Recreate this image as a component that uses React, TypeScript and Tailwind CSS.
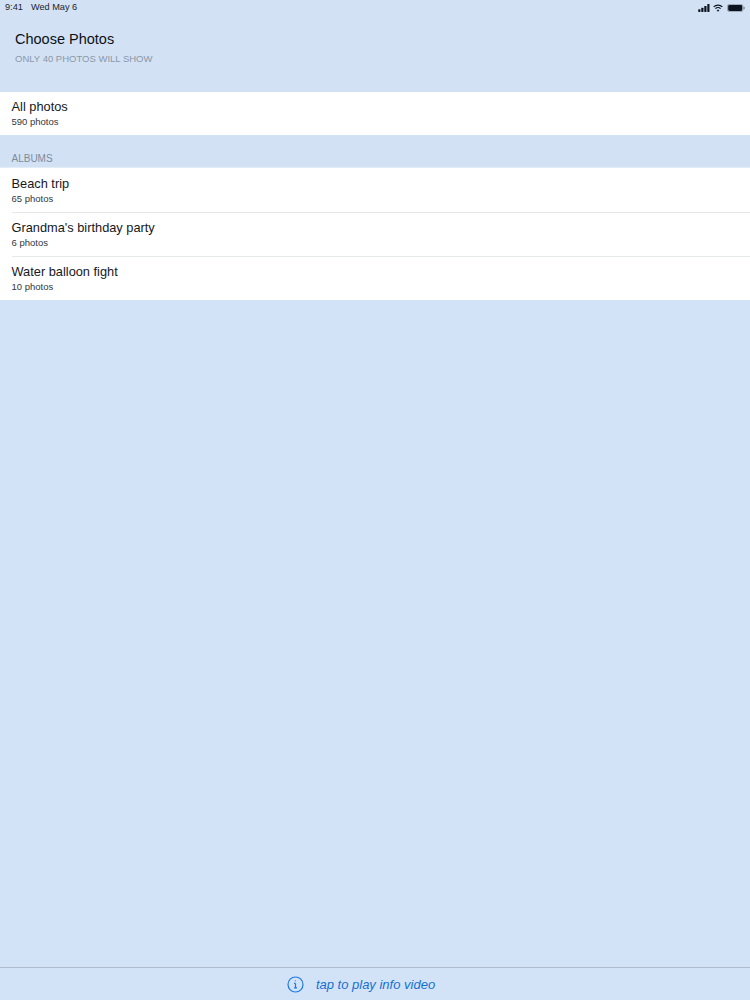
import React from 'react';

const font = { fontFamily: '"Liberation Sans", Arial, sans-serif' };

const albums = [
  { title: 'Beach trip', count: '65 photos' },
  { title: "Grandma's birthday party", count: '6 photos' },
  { title: 'Water balloon fight', count: '10 photos' },
];

function Row({ title, count, divider }: { title: string; count: string; divider?: boolean }) {
  return (
    <div className="h-[44px] pl-[11.5px] flex flex-col">
      <div className={`flex-1 flex flex-col ${divider ? 'border-t border-[#e6e8eb] pt-[7px]' : 'pt-[8px]'}`}>
        <div className="text-[12.8px] leading-[16px] text-[#15181c]">{title}</div>
        <div className="text-[9.5px] leading-[12px] mt-[1px] text-[#33383d]">{count}</div>
      </div>
    </div>
  );
}

function StatusIcons() {
  return (
    <div className="flex items-center gap-[3px]">
      <svg width="12" height="8" viewBox="0 0 13 9" fill="#0d1420">
        <rect x="0" y="6" width="2.5" height="3" rx="0.5" />
        <rect x="3.4" y="4.2" width="2.5" height="4.8" rx="0.5" />
        <rect x="6.8" y="2.2" width="2.5" height="6.8" rx="0.5" />
        <rect x="10.2" y="0" width="2.5" height="9" rx="0.5" />
      </svg>
      <svg width="10" height="8" viewBox="0 0 12 9" fill="none" stroke="#0d1420" strokeWidth="1.5">
        <path d="M0.8 3.2a7.4 7.4 0 0 1 10.4 0" />
        <path d="M2.9 5.3a4.4 4.4 0 0 1 6.2 0" />
        <path d="M6 8.8 4.7 7.3a1.9 1.9 0 0 1 2.6 0Z" fill="#0d1420" strokeWidth="0.4" />
      </svg>
      <svg width="18" height="8" viewBox="0 0 20 9" className="ml-[1px]">
        <rect x="0.4" y="0.4" width="17.4" height="8.2" rx="2.2" fill="none" stroke="#6f7a86" strokeWidth="0.7" />
        <rect x="1.2" y="1.2" width="15.8" height="6.6" rx="1.5" fill="#0d1420" />
        <rect x="18.5" y="3" width="1.2" height="3" rx="0.5" fill="#6f7a86" />
      </svg>
    </div>
  );
}

export default function App() {
  return (
    <div style={font} className="w-[750px] h-[1000px] bg-[#d3e3f7] flex flex-col overflow-hidden">
      <div className="bg-[#d2e2f4]">
        {/* status bar */}
        <div className="h-[15px] pl-[5px] pr-[5px] flex items-center justify-between text-[9.2px] text-[#1a2430]">
          <div className="flex gap-[8px]">
            <span>9:41</span>
            <span>Wed May 6</span>
          </div>
          <StatusIcons />
        </div>

        {/* header */}
        <div className="h-[77px] pl-[15px] pt-[14px]">
          <div className="text-[14.5px] leading-[20px] text-[#0c1116]">Choose Photos</div>
          <div className="text-[9.5px] leading-[12px] mt-[4px] text-[#8a98a8]">ONLY 40 PHOTOS WILL SHOW</div>
        </div>
      </div>

      <div className="bg-white h-[43px] overflow-hidden">
        <div className="h-[44px] pl-[11.5px] pt-[7px]">
          <div className="text-[12.8px] leading-[16px] text-[#15181c]">All photos</div>
          <div className="text-[9.5px] leading-[12px] mt-[1px] text-[#33383d]">590 photos</div>
        </div>
      </div>

      <div className="h-[33px] pl-[11.5px] pt-[17px] bg-[#d2e2f4] text-[10px] leading-[13px] text-[#7d8b9c] border-b border-[#e3edf8]">
        ALBUMS
      </div>

      <div className="bg-white">
        {albums.map((album, i) => (
          <Row key={album.title} title={album.title} count={album.count} divider={i > 0} />
        ))}
      </div>

      <div className="flex-1" />

      {/* footer */}
      <div className="h-[33px] border-t border-[#aebccd] flex items-center justify-center gap-[12px] pr-[28px]">
        <svg width="17" height="17" viewBox="0 0 17 17" fill="none" stroke="#1f7ae0" strokeWidth="1.2">
          <circle cx="8.5" cy="8.5" r="7.5" />
          <path d="M8.5 7.4v4.4M7 7.4h1.5M7 11.9h3" />
          <circle cx="8.3" cy="4.8" r="0.6" fill="#1f7ae0" stroke="none" />
        </svg>
        <span className="text-[13px] italic text-[#1670d2] mt-[1px]">tap to play info video</span>
      </div>
    </div>
  );
}
